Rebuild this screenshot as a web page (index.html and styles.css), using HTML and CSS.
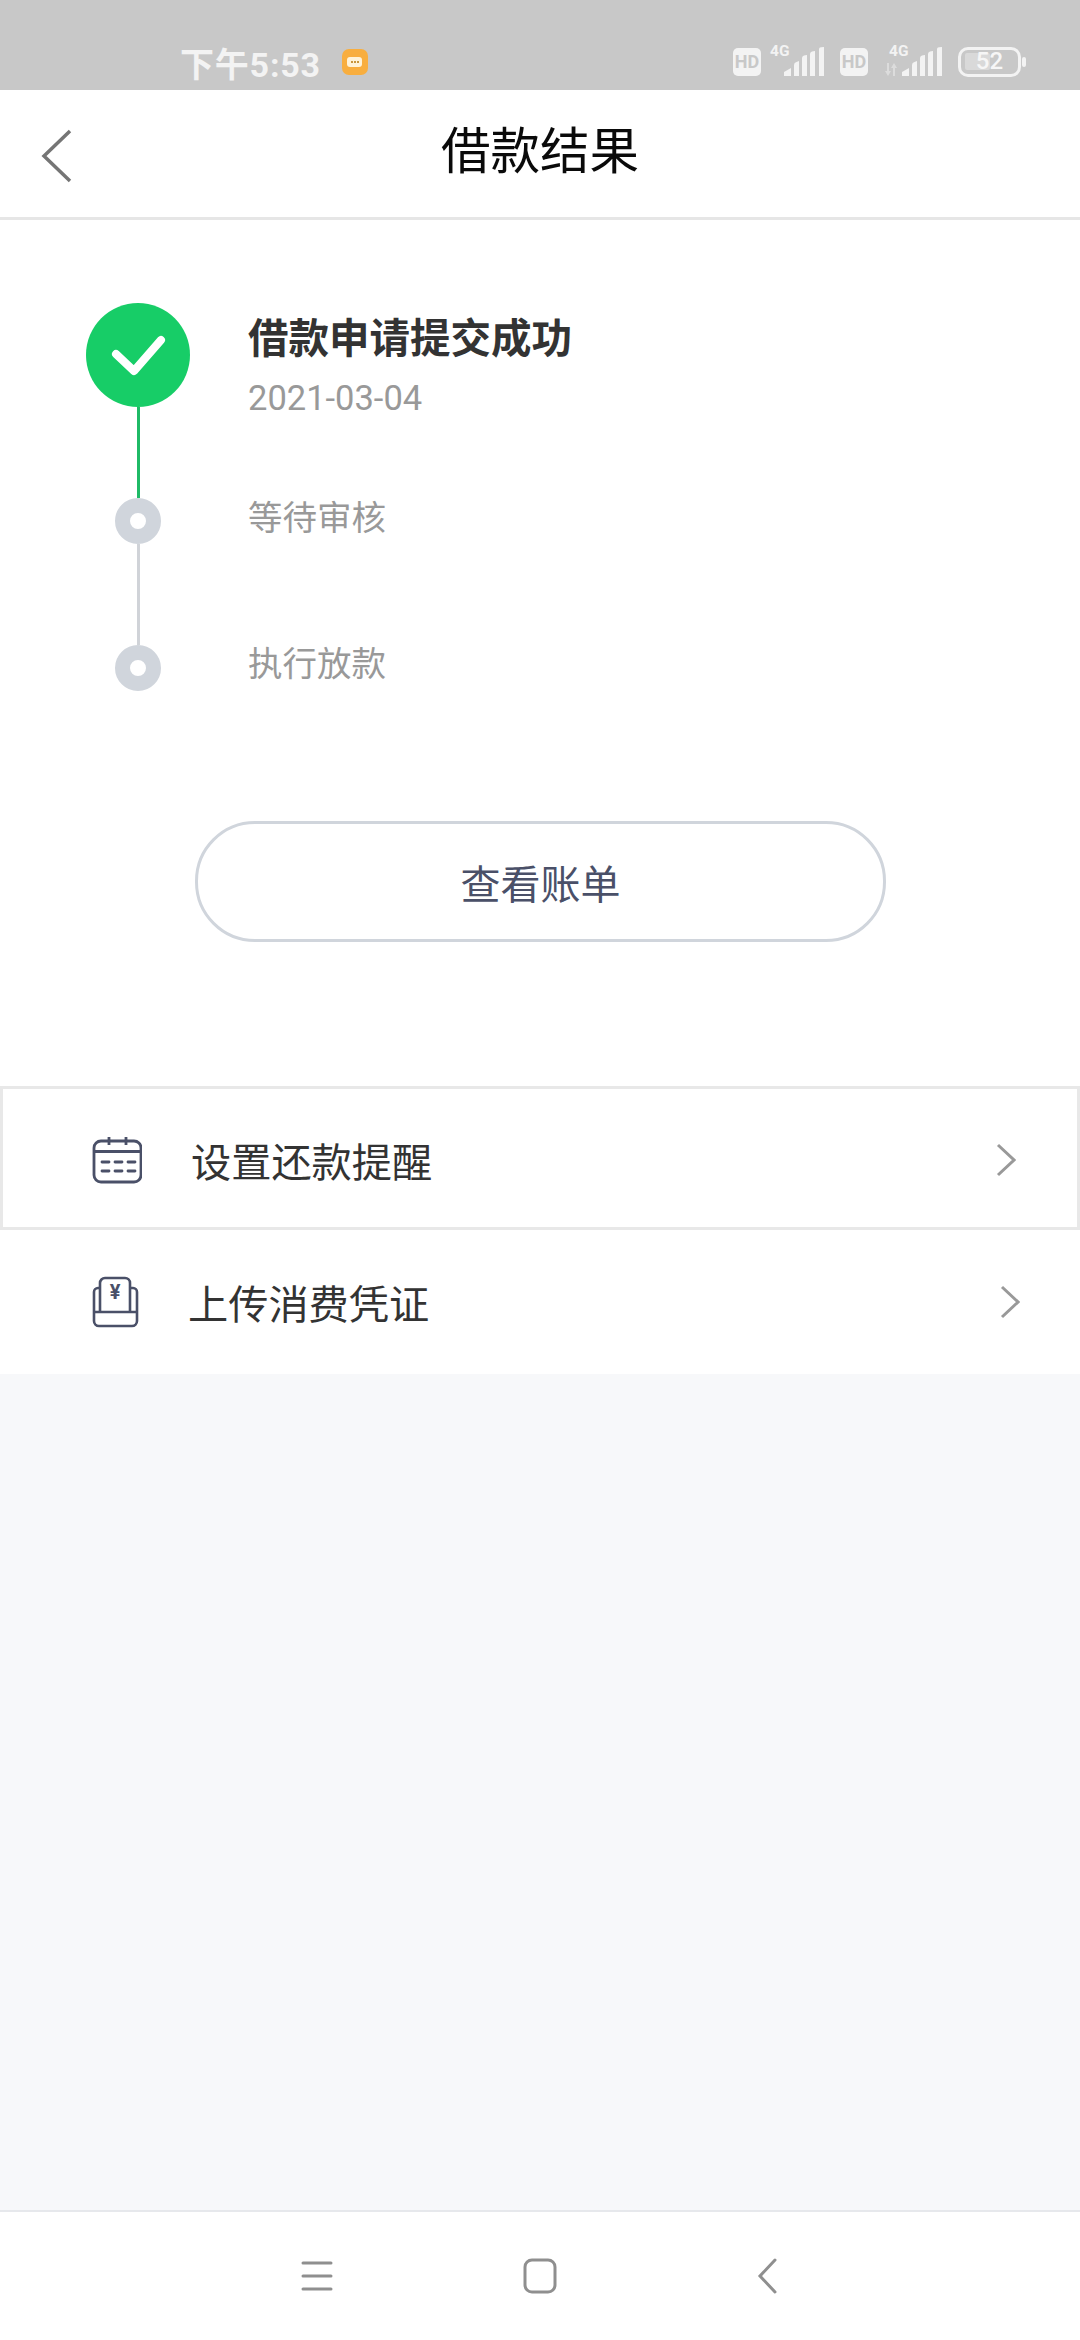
FILE: index.html
```html
<!DOCTYPE html>
<html lang="zh-CN">
<head>
<meta charset="utf-8">
<title>借款结果</title>
<link rel="stylesheet" href="styles.css">
</head>
<body>
<div class="app">
  <div class="statusbar">
    <span class="time">下午5:53</span>
    <span class="badge"><span class="bubble"><i></i><i></i><i></i></span></span>
    <div class="sys">
      <span class="hd">HD</span>
      <span class="net net-a">
        <span class="fourg">4G</span>
        <svg class="signal" width="40" height="29" viewBox="0 0 40 29"><path d="M0 29V25L7 21V29ZM10 29V18Q10 15.500 12.500 15L15 14V29ZM18 29V11Q18 9 20 8.500L23 8V29ZM26 29V7Q26 5 28 4.500L31 4V29ZM35 29V2Q35 .5 37 .2L40 0V29Z"/></svg>
      </span>
      <span class="hd hd-b">HD</span>
      <span class="net net-b">
        <svg class="arrows" width="12" height="13" viewBox="0 0 12 13"><path d="M0 8H2V0H4V8H6L3 13ZM6 5L9 0L12 5H10V13H8V5Z"/></svg>
        <span class="fourg">4G</span>
        <svg class="signal" width="40" height="29" viewBox="0 0 40 29"><path d="M0 29V25L7 21V29ZM10 29V18Q10 15.500 12.500 15L15 14V29ZM18 29V11Q18 9 20 8.500L23 8V29ZM26 29V7Q26 5 28 4.500L31 4V29ZM35 29V2Q35 .5 37 .2L40 0V29Z"/></svg>
      </span>
      <span class="battery"><span class="level"></span><span class="pct">52</span></span>
      <span class="tip"></span>
    </div>
  </div>

  <header class="topbar">
    <svg class="back" width="32" height="56" viewBox="0 0 32 56"><path d="M29 3L3 28L29 53" fill="none" stroke="#757575" stroke-width="3.500"/></svg>
    <h1 class="title">借款结果</h1>
  </header>

  <main class="result">
    <div class="timeline">
      <div class="track">
        <span class="done">
          <svg width="56" height="44" viewBox="0 0 56 44"><path d="M6 21L24 38L51 7" fill="none" stroke="#fff" stroke-width="8" stroke-linecap="round" stroke-linejoin="round"/></svg>
        </span>
        <span class="line line-done"></span>
        <span class="dot"></span>
        <span class="line line-todo"></span>
        <span class="dot"></span>
      </div>
      <div class="labels">
        <div class="step-title">借款申请提交成功</div>
        <div class="step-date">2021-03-04</div>
        <div class="step-next">等待审核</div>
        <div class="step-next step-last">执行放款</div>
      </div>
    </div>
    <button class="bill">查看账单</button>
  </main>

  <section class="menu">
    <div class="row row-a">
      <svg class="ico" width="50" height="48" viewBox="0 0 50 48" fill="none" stroke="#4a5068" stroke-width="2.800">
        <rect x="2" y="5" width="47" height="41" rx="7"/>
        <path d="M2 15.500H49M17 1V9M34 1V9"/>
        <path d="M10 26H17M23 26H30M36 26H43M10 35H17M23 35H30M36 35H43" stroke-linecap="round"/>
      </svg>
      <span class="row-text">设置还款提醒</span>
      <svg class="chev" width="20" height="34" viewBox="0 0 20 34"><path d="M2 2L18 17L2 32" fill="none" stroke="#999" stroke-width="3"/></svg>
    </div>
    <div class="row row-b">
      <svg class="ico" width="47" height="52" viewBox="0 0 47 52" fill="none" stroke="#4a5068" stroke-width="2.600">
        <path d="M8 12H6A4 4 0 0 0 2 16V45A5 5 0 0 0 7 50H40A5 5 0 0 0 45 45V16A4 4 0 0 0 41 12H39"/>
        <path d="M2 36H45M8 36V7A5 5 0 0 1 13 2H33A5 5 0 0 1 38 7V36"/>
        <text class="yen" x="23" y="23" text-anchor="middle">¥</text>
      </svg>
      <span class="row-text">上传消费凭证</span>
      <svg class="chev" width="20" height="34" viewBox="0 0 20 34"><path d="M2 2L18 17L2 32" fill="none" stroke="#999" stroke-width="3"/></svg>
    </div>
  </section>

  <div class="filler"></div>

  <nav class="navbar">
    <svg class="nav-menu" width="32" height="30" viewBox="0 0 32 30"><path d="M2 2H30M2 15H30M2 28H30" fill="none" stroke="#8f8f8f" stroke-width="3" stroke-linecap="round"/></svg>
    <svg class="nav-home" width="34" height="36" viewBox="0 0 34 36"><rect x="2" y="2" width="30" height="32" rx="7" fill="none" stroke="#8f8f8f" stroke-width="3"/></svg>
    <svg class="nav-back" width="20" height="36" viewBox="0 0 20 36"><path d="M18 2L3 18L18 34" fill="none" stroke="#8f8f8f" stroke-width="3" stroke-linecap="round"/></svg>
  </nav>
</div>
</body>
</html>
```
FILE: styles.css
```css
* { box-sizing: border-box; }
html, body { margin: 0; padding: 0; }
body { font-family: "Noto Sans CJK SC", Roboto, sans-serif; background: #fff; }
.app { width: 1080px; height: 2340px; display: flex; flex-direction: column; overflow: hidden; }

.statusbar { height: 90px; flex: none; background: #c8c8c8; display: flex; align-items: center; padding: 40px 54px 0 180px; color: #f3f3f3; }
.time { font-family: Roboto, "Noto Sans CJK SC", sans-serif; font-size: 34px; font-weight: 700; line-height: 50px; letter-spacing: .8px; }
.badge { width: 26px; height: 26px; margin: 0 0 7px 21px; border-radius: 7px; background: #f8ae3f; display: flex; align-items: center; justify-content: center; }
.bubble { width: 15px; height: 10px; border-radius: 3px; background: #fff3d8; display: flex; align-items: center; justify-content: center; gap: 1px; }
.bubble i { width: 2px; height: 2px; background: #c9963d; }
.sys { margin: 0 0 6px auto; display: flex; align-items: flex-end; height: 30px; }
.hd { width: 28px; height: 28px; border-radius: 5px; background: #f3f3f3; color: #c8c8c8; font: 700 18px/28px Roboto, sans-serif; text-align: center; margin-bottom: 1px; }
.net { position: relative; display: flex; align-items: flex-end; height: 30px; margin-left: 9px; }
.net-a { width: 54px; justify-content: flex-end; }
.net-b { width: 57px; justify-content: flex-end; margin-left: 17px; }
.signal { fill: #f3f3f3; display: block; margin-bottom: 1px; }
.fourg { position: absolute; top: -4px; left: 0; font: 700 15.500px/16px Roboto, sans-serif; color: #f3f3f3; }
.net-b .fourg { left: 4px; }
.arrows { position: absolute; left: 0; bottom: 1px; fill: #dcdcdc; }
.hd-b { margin-left: 16px; }
.battery { position: relative; width: 63px; height: 30px; margin-left: 16px; border: 3.500px solid #f3f3f3; border-radius: 10px; }
.level { position: absolute; left: 4px; top: 3px; width: 25px; height: 17px; border-radius: 2px; background: #d9d9d9; }
.pct { position: absolute; left: 0; right: 0; top: 0; text-align: center; font: 500 24px/23px Roboto, sans-serif; color: #f6f6f6; }
.tip { width: 4px; height: 10px; margin: 0 0 10px 1px; border-radius: 2px; background: #f3f3f3; }

.topbar { height: 130px; flex: none; border-bottom: 3px solid #e6e6e6; display: flex; align-items: center; justify-content: center; position: relative; }
.back { position: absolute; left: 41px; top: 38px; }
.title { margin: 0 0 12px; font-size: 49.500px; font-weight: 400; line-height: 70px; color: #0a0a0a; }

.result { flex: none; height: 866px; padding: 83px 0 0 86px; display: flex; flex-direction: column; }
.timeline { display: flex; gap: 58px; }
.track { width: 104px; display: flex; flex-direction: column; align-items: center; }
.done { width: 104px; height: 104px; border-radius: 50%; background: #17cd67; display: flex; align-items: center; justify-content: center; }
.line { width: 3px; }
.line-done { height: 91px; background: #1fba66; }
.line-todo { height: 101px; background: #d0d3d8; }
.dot { width: 46px; height: 46px; border-radius: 50%; border: 15px solid #d0d5dc; background: #fff; }
.labels { padding-top: 5px; }
.step-title { font-size: 40.500px; font-weight: 700; line-height: 56px; color: #333; }
.step-date { margin-top: 12px; font-family: Roboto, sans-serif; font-size: 34.500px; line-height: 44px; color: #999; }
.step-next { margin-top: 73px; font-size: 34.500px; line-height: 44px; color: #999; }
.step-last { margin-top: 102px; }
.bill { width: 691px; height: 121px; margin: 130px 0 0 109px; padding: 0; background: #fff; border: 3px solid #d0d5dc; border-radius: 60px; font-family: "Noto Sans CJK SC", sans-serif; font-size: 40px; color: #4a5068; }

.menu { flex: none; }
.row { height: 144px; display: flex; align-items: center; gap: 49px; padding-left: 92px; }
.row-a { border: 3px solid #e8e8e8; padding: 3px 61px 0 89px; }
.row-b { padding-right: 60px; }
.ico { flex: none; display: block; }
.yen { font: 700 20px Roboto, sans-serif; fill: #4a5068; stroke: none; }
.row-text { flex: 1; font-size: 40.200px; line-height: 56px; color: #333; }
.chev { flex: none; }

.filler { flex: 1; background: #f7f8fa; }
.navbar { height: 130px; flex: none; border-top: 2px solid #e6e8ec; background: #fff; display: flex; align-items: center; padding-left: 301px; }
.nav-home { margin-left: 190px; }
.nav-back { margin-left: 200px; }
```
